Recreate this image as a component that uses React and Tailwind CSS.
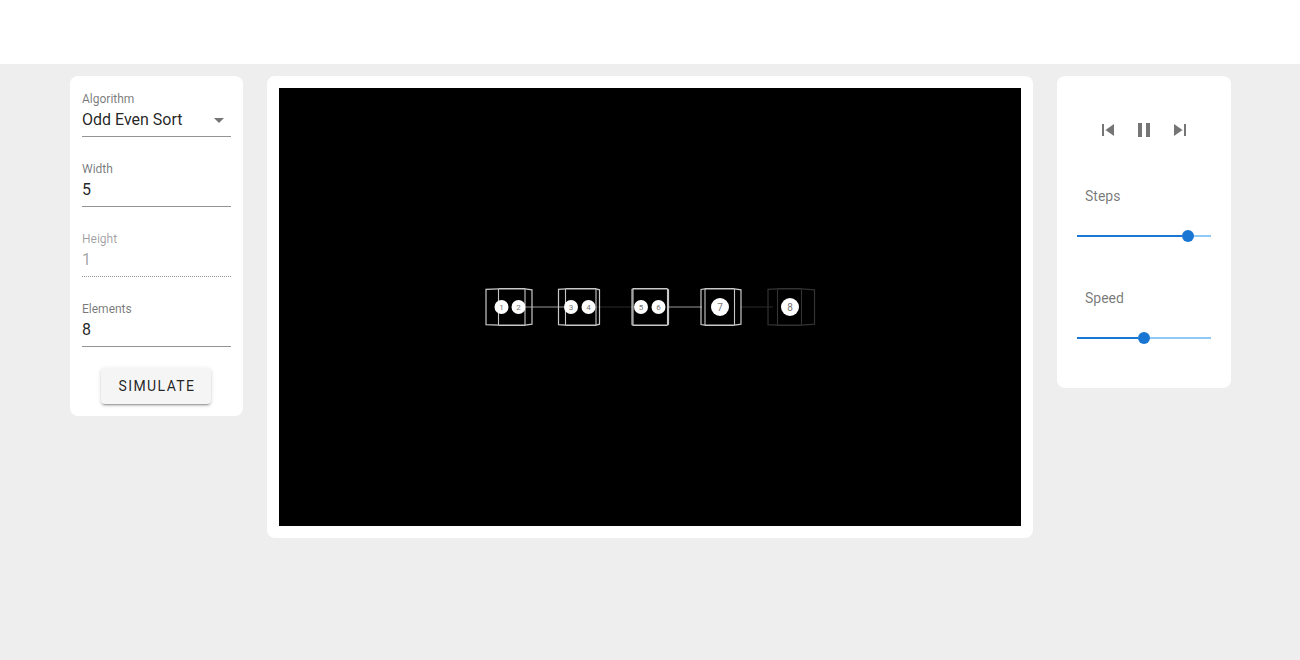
function Field({ label, value, disabled, select }) {
  return (
    <div className="relative h-[49px] flex flex-col">
      <div className={`h-[22px] pt-[4px] text-[12px] leading-[14px] ${disabled ? "text-black/38" : "text-black/54"}`}>{label}</div>
      <div className={`h-[26px] text-[16px] leading-[19px] ${disabled ? "text-black/38" : "text-black/87"}`}>{value}</div>
      <div className={disabled ? "border-b border-dotted border-black/42" : "border-b border-black/42"} />
      {select && (
        <svg className="absolute right-0 top-[20px] w-6 h-6 text-black/54" viewBox="0 0 24 24" fill="currentColor">
          <path d="M7 10l5 5 5-5z" />
        </svg>
      )}
    </div>
  );
}

function Slider({ label, left, right }) {
  return (
    <div>
      <div className="pl-[8px] h-[20px] text-[14px] leading-[20px] text-black/54">{label}</div>
      <div className="mt-[24px] flex items-center h-3">
        <div className={`${left} h-[2px] bg-[#1976d2]`} />
        <div className="w-3 h-3 rounded-full bg-[#1976d2]" />
        <div className={`${right} h-[2px] bg-[#90caf9]`} />
      </div>
    </div>
  );
}

function Icon({ d }) {
  return (
    <svg className="w-6 h-6 text-black/54" viewBox="0 0 24 24" fill="currentColor">
      <path d={d} />
    </svg>
  );
}

function Cube({ o, i, r, R, c = "#c8c8c8" }) {
  const t = 288.8, b = 325.2;
  return (
    <g fill="none" stroke={c} strokeWidth="1.5">
      <path d={`M${i} ${t} L${r} ${t} M${i} ${b} L${r} ${b}`} />
      <path d={`M${i} ${t} L${i} ${b} M${r} ${t} L${r} ${b}`} strokeWidth="1.1" />
      <path d={`M${i} ${t} L${o} ${t + 0.6} L${o} ${b - 0.6} L${i} ${b}`} strokeWidth="1.2" />
      <path d={`M${r} ${t} L${R} ${t + 1} L${R} ${b - 1} L${r} ${b}`} strokeWidth="1.2" />
    </g>
  );
}

function Node({ x, n, r = 7 }) {
  return (
    <g>
      <circle cx={x} cy={307} r={r} fill="#fff" />
      <text x={x} y={r > 8 ? 310.5 : 310} textAnchor="middle" fontSize={r > 8 ? 10 : 8} fontFamily="Roboto, sans-serif" fill="#777">{n}</text>
    </g>
  );
}

export default function App() {
  return (
    <div className="min-h-[660px] bg-[#eeeeee] font-['Roboto',sans-serif]">
      <div className="h-16 bg-white" />
      <div className="flex items-start gap-6 pl-[70px] pt-3">
        <div className="w-[173px] bg-white rounded-lg p-3 flex flex-col gap-[21px]">
          <Field label="Algorithm" value="Odd Even Sort" select />
          <Field label="Width" value="5" />
          <Field label="Height" value="1" disabled />
          <Field label="Elements" value="8" />
          <button className="self-center w-[110px] h-9 ml-[-1px] pl-[2px] bg-[#f5f5f5] rounded text-[14px] font-normal tracking-[1.4px] text-black/87 shadow-[0_3px_1px_-2px_rgba(0,0,0,0.2),0_2px_2px_0_rgba(0,0,0,0.14),0_1px_5px_0_rgba(0,0,0,0.12)]">
            SIMULATE
          </button>
        </div>
        <div className="w-[766px] bg-white rounded-lg p-3">
          <div className="h-[438px] bg-black">
            <svg className="block w-full h-full" viewBox="279 88 742 438">
              <line x1="526" y1="307" x2="564" y2="307" stroke="#999" strokeWidth="1.2" />
              <line x1="595" y1="307" x2="635" y2="307" stroke="#2a2a2a" strokeWidth="1.2" />
              <line x1="668" y1="307" x2="702" y2="307" stroke="#999" strokeWidth="1.2" />
              <line x1="740" y1="307" x2="773" y2="307" stroke="#2a2a2a" strokeWidth="1.2" />
              <Cube o={486} i={498.5} r={525} R={532} />
              <Cube o={558.5} i={565.5} r={596} R={599.5} />
              <Cube o={632} i={633} r={667.5} R={668.5} />
              <Cube o={701} i={705} r={734.5} R={741} />
              <Cube o={768} i={777.5} r={801.5} R={814.5} c="#333" />
              <Node x={501.5} n="1" />
              <Node x={518.5} n="2" />
              <Node x={571} n="3" />
              <Node x={588.5} n="4" />
              <Node x={641} n="5" />
              <Node x={658.5} n="6" />
              <Node x={720} n="7" r={9} />
              <Node x={790} n="8" r={9} />
            </svg>
          </div>
        </div>
        <div className="w-[174px] h-[312px] bg-white rounded-lg px-5">
          <div className="mt-[42px] flex justify-center gap-3">
            <Icon d="M6 6h2v12H6zm3.5 6l8.5 6V6z" />
            <Icon d="M6 19h4V5H6v14zm8-14v14h4V5h-4z" />
            <Icon d="M6 18l8.5-6L6 6v12zM16 6v12h2V6h-2z" />
          </div>
          <div className="mt-[44px]">
            <Slider label="Steps" left="w-[105px]" right="w-[17px]" />
          </div>
          <div className="mt-[46px]">
            <Slider label="Speed" left="w-[61px]" right="w-[61px]" />
          </div>
        </div>
      </div>
    </div>
  );
}
